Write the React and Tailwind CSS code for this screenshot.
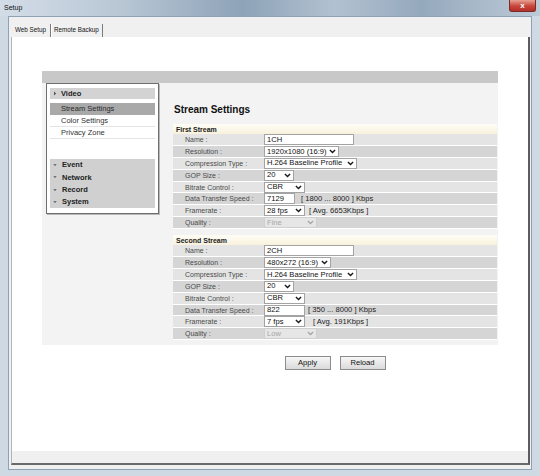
import React from 'react';

const FONT = "font-['Liberation_Sans',Arial,sans-serif]";

function Chevron({ disabled }) {
  return (
    <svg width="7" height="5" viewBox="0 0 7 5" className="shrink-0">
      <path
        d="M0.9 1 L3.5 3.6 L6.1 1"
        fill="none"
        stroke={disabled ? '#a8a8a8' : '#1a1a1a'}
        strokeWidth="1.4"
      />
    </svg>
  );
}

function Select({ w, value, disabled }) {
  return (
    <div
      className={`${w} h-[11px] flex items-center justify-between border pl-[2px] pr-[2px] text-[7.6px] leading-none ${
        disabled
          ? 'border-[#cfcfcf] bg-[#e6e6e6] text-[#a6a6a6]'
          : 'border-[#a3a3a3] bg-white text-[#111]'
      }`}
    >
      <span>{value}</span>
      <Chevron disabled={disabled} />
    </div>
  );
}

function Input({ w, value }) {
  return (
    <div className={`${w} h-[11px] flex items-center border border-[#a3a3a3] bg-white pl-[2px] text-[7.6px] leading-none text-[#111]`}>
      {value}
    </div>
  );
}

function Row({ label, dark, children }) {
  return (
    <div className={`h-[11.9px] flex items-center border-b border-white ${dark ? 'bg-[#d5d5d5]' : 'bg-[#e4e4e4]'}`}>
      <div className="w-[90px] pl-[12px] text-[7px] leading-none text-[#4a4a4a]">{label}</div>
      <div className="flex-1 flex items-center pl-[1px]">{children}</div>
    </div>
  );
}

function Note({ className, children }) {
  return <span className={`text-[7.6px] leading-none text-[#222] ${className}`}>{children}</span>;
}

function StreamTable({ title, s }) {
  return (
    <div>
      <div className="h-[10px] flex items-center pl-[3px] bg-[linear-gradient(180deg,#fffdf6,#f8f1dc)] text-[7px] font-bold leading-none text-[#222]">
        {title}
      </div>
      <Row label="Name :">
        <Input w="w-[90px]" value={s.name} />
      </Row>
      <Row label="Resolution :" dark>
        <Select w={s.resW} value={s.res} />
      </Row>
      <Row label="Compression Type :">
        <Select w="w-[93px]" value="H.264 Baseline Profile" />
      </Row>
      <Row label="GOP Size :" dark>
        <Select w="w-[30px]" value="20" />
      </Row>
      <Row label="Bitrate Control :">
        <Select w="w-[41px]" value="CBR" />
      </Row>
      <Row label="Data Transfer Speed :" dark>
        <Input w={s.rateW} value={s.rate} />
        <Note className={s.rangeMl}>{s.range}</Note>
      </Row>
      <Row label="Framerate :">
        <Select w="w-[41px]" value={s.fps} />
        <Note className={s.avgMl}>{s.avg}</Note>
      </Row>
      <Row label="Quality :" dark>
        <Select w="w-[53px]" value={s.quality} disabled />
      </Row>
    </div>
  );
}

function NavArrow({ right }) {
  return right ? (
    <svg width="4" height="5" viewBox="0 0 4 5" className="shrink-0">
      <path d="M1 0.5 L3.2 2.5 L1 4.5 Z" fill="#555" />
    </svg>
  ) : (
    <svg width="4" height="4" viewBox="0 0 4 4" className="shrink-0">
      <path d="M0.3 1.2 L3.7 1.2 L2 3 Z" fill="#555" />
    </svg>
  );
}

function Nav() {
  return (
    <div className="ml-[4px] w-[113px] h-[131px] bg-white border border-[#6e6e6e] shadow-[1px_1px_0_#b8b8b8] px-[3px] pt-[4px] flex flex-col">
      <div className="h-[11px] bg-[#d3d3d3] flex items-center gap-[4px] pl-[3px] text-[7.5px] font-bold leading-none text-[#222]">
        <NavArrow right />
        Video
      </div>
      <div className="mt-[4px] h-[12px] bg-[#a9a9a9] flex items-center pl-[11px] text-[7.5px] leading-none text-[#2a2a2a]">
        Stream Settings
      </div>
      <div className="h-[12px] border-b border-[#e4e4e4] flex items-center pl-[11px] text-[7.5px] leading-none text-[#333]">
        Color Settings
      </div>
      <div className="h-[12px] border-b border-[#e4e4e4] flex items-center pl-[11px] text-[7.5px] leading-none text-[#333]">
        Privacy Zone
      </div>
      <div className="mt-[20px] bg-[#d0d0d0] flex flex-col">
        {['Event', 'Network', 'Record', 'System'].map((t) => (
          <div key={t} className="h-[12.25px] flex items-center gap-[5px] pl-[3px] text-[7.5px] font-bold leading-none text-[#222]">
            <NavArrow />
            {t}
          </div>
        ))}
      </div>
    </div>
  );
}

const first = {
  name: '1CH',
  res: '1920x1080 (16:9)',
  resW: 'w-[75px]',
  rate: '7129',
  rateW: 'w-[31px]',
  range: '[ 1800 ... 8000 ] Kbps',
  rangeMl: 'ml-[6px]',
  fps: '28 fps',
  avg: '[ Avg. 6653Kbps ]',
  avgMl: 'ml-[4px]',
  quality: 'Fine',
};

const second = {
  name: '2CH',
  res: '480x272 (16:9)',
  resW: 'w-[67px]',
  rate: '822',
  rateW: 'w-[41px]',
  range: '[ 350 ... 8000 ] Kbps',
  rangeMl: 'ml-[3px]',
  fps: '7 fps',
  avg: '[ Avg. 191Kbps ]',
  avgMl: 'ml-[8px]',
  quality: 'Low',
};

function Button({ children }) {
  return (
    <div className="w-[46px] h-[14px] flex items-center justify-center border border-[#8c8c8c] bg-[linear-gradient(180deg,#f7f7f7,#dadada)] text-[7.6px] leading-none text-[#111]">
      {children}
    </div>
  );
}

export default function App() {
  return (
    <div className={`w-[540px] h-[476px] flex flex-col overflow-hidden bg-[#cfd9e4] ${FONT}`}>
      {/* title bar */}
      <div className="h-[16px] shrink-0 flex items-start justify-between bg-[linear-gradient(90deg,#d3dde8_0%,#b9c7d5_22%,#8ea3b8_45%,#b2c1d0_62%,#95a9bd_78%,#bdcad7_100%)]">
        <span className="pl-[4px] pt-[4px] text-[7px] leading-none text-[#111]">Setup</span>
        <div className="mr-[4px] w-[27px] h-[12px] rounded-b-[3px] border border-t-0 border-[#7a2b25] bg-[linear-gradient(180deg,#e8a195,#c7453a_55%,#b2302a)] flex items-center justify-center text-[8px] font-bold leading-none text-white">
          x
        </div>
      </div>

      {/* dialog */}
      <div className="flex-1 mx-[8px] mb-[6px] flex flex-col bg-[#f0f0f0] border border-[#8fa2b5]">
        <div className="h-[20px] shrink-0 flex items-end pl-[6px] text-[6.3px] leading-none text-[#111]">
          <div className="h-[13px] flex items-center pr-[4px] border-r border-[#7a7a7a]">Web Setup</div>
          <div className="h-[13px] flex items-center pl-[2px] pr-[3px] border-l border-white border-r border-r-[#7a7a7a]">
            Remote Backup
          </div>
        </div>

        <div className="flex-1 ml-[2px] mr-[1px] mb-[4px] flex flex-col bg-white border-l border-[#b4b4b4] border-r-2 border-r-[#5c5c5c] border-b-2 border-b-[#6a6a6a]">
          <div className="flex-1 pt-[34px] pl-[30px]">
            <div className="w-[456px]">
              <div className="h-[12px] bg-[#c8c8c8]" />
              <div className="flex items-start bg-[#f3f3f3]">
                <Nav />
                <div className="ml-[14px] w-[324px] pt-[21px] pb-[5px]">
                  <div className="h-[11px] pl-[1px] text-[10px] font-bold leading-[11px] text-[#111]">Stream Settings</div>
                  <div className="mt-[9px]">
                    <StreamTable title="First Stream" s={first} />
                  </div>
                  <div className="mt-[6px]">
                    <StreamTable title="Second Stream" s={second} />
                  </div>
                </div>
              </div>
              <div className="ml-[131px] w-[324px] mt-[11px] flex justify-center gap-[9px]">
                <Button>Apply</Button>
                <Button>Reload</Button>
              </div>
            </div>
          </div>
          <div className="h-[12px] shrink-0 bg-[#f0f0f0]" />
        </div>
      </div>
    </div>
  );
}
